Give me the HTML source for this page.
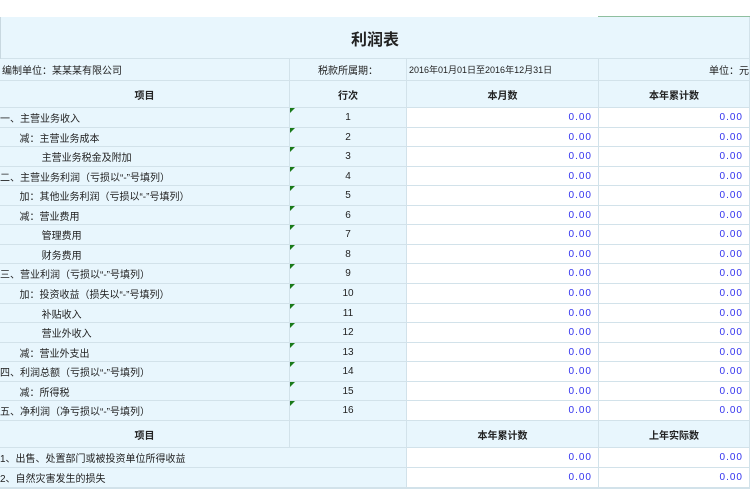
<!DOCTYPE html><html><head><meta charset="utf-8"><style>
*{margin:0;padding:0;box-sizing:border-box}
body{width:750px;height:501px;background:#fff;position:relative;overflow:hidden;font-family:"Liberation Sans","Noto Sans CJK SC",sans-serif;font-size:10px;color:#222}
.c{position:absolute;border-right:1px solid #d2e2ea;border-bottom:2px solid #d2e2ea;background:#e8f6fd;display:flex;align-items:center;white-space:nowrap;overflow:hidden}
.w{background:#fff}
.n{justify-content:flex-end;padding-right:6px;color:#3333ee;letter-spacing:1px}
.ct{justify-content:center}
.b{font-weight:bold}
.tri{position:absolute;left:0;top:0;width:0;height:0;border-top:5px solid #1a7a1a;border-right:5px solid transparent}
</style></head><body>
<div style="position:absolute;left:598px;top:16px;width:152px;height:2px;background:#8fbf9f"></div>
<div class="c ct" style="left:0;top:17px;width:750px;height:43px;font-size:16px;font-weight:bold;border-left:1px solid #c8d8e0;padding-left:0">利润表</div>
<div class="c" style="left:0;top:59px;width:290px;height:23px;padding-left:2px">编制单位：某某某有限公司</div>
<div class="c ct" style="left:290px;top:59px;width:117px;height:23px">税款所属期：</div>
<div class="c" style="left:407px;top:59px;width:192px;height:23px;padding-left:2px;font-size:9px">2016年01月01日至2016年12月31日</div>
<div class="c" style="left:599px;top:59px;width:151px;height:23px;justify-content:flex-end">单位：元</div>
<div class="c ct b" style="left:0;top:81px;width:290px;height:28px">项目</div>
<div class="c ct b" style="left:290px;top:81px;width:117px;height:28px">行次</div>
<div class="c ct b" style="left:407px;top:81px;width:192px;height:28px">本月数</div>
<div class="c ct b" style="left:599px;top:81px;width:151px;height:28px">本年累计数</div>
<div id="rows"></div>
<script>
var items=["一、主营业务收入","&nbsp;&nbsp;&nbsp;&nbsp;&nbsp;&nbsp;&nbsp;减：主营业务成本","&nbsp;&nbsp;&nbsp;&nbsp;&nbsp;&nbsp;&nbsp;&nbsp;&nbsp;&nbsp;&nbsp;&nbsp;&nbsp;&nbsp;&nbsp;主营业务税金及附加","二、主营业务利润（亏损以“-”号填列）","&nbsp;&nbsp;&nbsp;&nbsp;&nbsp;&nbsp;&nbsp;加：其他业务利润（亏损以“-”号填列）","&nbsp;&nbsp;&nbsp;&nbsp;&nbsp;&nbsp;&nbsp;减：营业费用","&nbsp;&nbsp;&nbsp;&nbsp;&nbsp;&nbsp;&nbsp;&nbsp;&nbsp;&nbsp;&nbsp;&nbsp;&nbsp;&nbsp;&nbsp;管理费用","&nbsp;&nbsp;&nbsp;&nbsp;&nbsp;&nbsp;&nbsp;&nbsp;&nbsp;&nbsp;&nbsp;&nbsp;&nbsp;&nbsp;&nbsp;财务费用","三、营业利润（亏损以“-”号填列）","&nbsp;&nbsp;&nbsp;&nbsp;&nbsp;&nbsp;&nbsp;加：投资收益（损失以“-”号填列）","&nbsp;&nbsp;&nbsp;&nbsp;&nbsp;&nbsp;&nbsp;&nbsp;&nbsp;&nbsp;&nbsp;&nbsp;&nbsp;&nbsp;&nbsp;补贴收入","&nbsp;&nbsp;&nbsp;&nbsp;&nbsp;&nbsp;&nbsp;&nbsp;&nbsp;&nbsp;&nbsp;&nbsp;&nbsp;&nbsp;&nbsp;营业外收入","&nbsp;&nbsp;&nbsp;&nbsp;&nbsp;&nbsp;&nbsp;减：营业外支出","四、利润总额（亏损以“-”号填列）","&nbsp;&nbsp;&nbsp;&nbsp;&nbsp;&nbsp;&nbsp;减：所得税","五、净利润（净亏损以“-”号填列）"];
var h="";
for(var i=0;i<16;i++){var t=Math.round(108+i*19.55),hh=Math.round(108+(i+1)*19.55)-t+1;
h+='<div class="c" style="left:0;top:'+t+'px;width:290px;height:'+hh+'px">'+items[i]+'</div>';
h+='<div class="c ct" style="left:290px;top:'+t+'px;width:117px;height:'+hh+'px"><span class="tri"></span>'+(i+1)+'</div>';
h+='<div class="c w n" style="left:407px;top:'+t+'px;width:192px;height:'+hh+'px">0.00</div>';
h+='<div class="c w n" style="left:599px;top:'+t+'px;width:151px;height:'+hh+'px">0.00</div>';}
h+='<div class="c ct b" style="left:0;top:421px;width:290px;height:28px">项目</div>';
h+='<div class="c" style="left:290px;top:421px;width:117px;height:28px"></div>';
h+='<div class="c ct b" style="left:407px;top:421px;width:192px;height:28px">本年累计数</div>';
h+='<div class="c ct b" style="left:599px;top:421px;width:151px;height:28px">上年实际数</div>';
var l=["1、出售、处置部门或被投资单位所得收益","2、自然灾害发生的损失"];
for(var j=0;j<2;j++){var t=448+j*20;
h+='<div class="c" style="left:0;top:'+t+'px;width:407px;height:21px">'+l[j]+'</div>';
h+='<div class="c w n" style="left:407px;top:'+t+'px;width:192px;height:21px">0.00</div>';
h+='<div class="c w n" style="left:599px;top:'+t+'px;width:151px;height:21px">0.00</div>';}
document.getElementById("rows").innerHTML=h;
</script>
</body></html>
